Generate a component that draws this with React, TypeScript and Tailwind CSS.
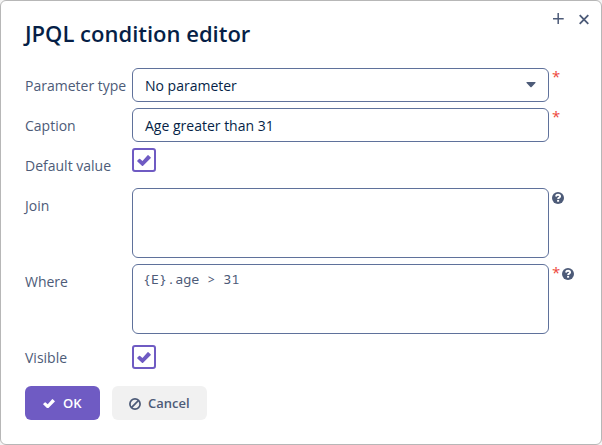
import type { ReactNode } from "react";

function CheckIcon({ className }: { className: string }) {
  return (
    <svg viewBox="0 0 14 11" className={className} fill="currentColor">
      <path d="M11.4 0.2L13.6 2.3Q14.1 2.8 13.6 3.3L6.1 10.7Q5.5 11.2 4.9 10.7L0.4 6.5Q-0.1 6 0.4 5.5L2 4Q2.6 3.6 3.1 4L5.5 6.1L10.6 0.3Q11 -0.1 11.4 0.2Z" />
    </svg>
  );
}

function HelpIcon({ className = "" }: { className?: string }) {
  return (
    <svg viewBox="0 0 12 12" className={`size-3 shrink-0 ${className}`}>
      <circle cx="6" cy="6" r="6" fill="#4d5b78" />
      <path d="M3.9 4.4C4.2 3.2 5 2.8 6 2.8C7.2 2.8 8.1 3.4 8.1 4.4C8.1 5.7 6.1 5.5 6.1 7" fill="none" stroke="#fff" strokeWidth="1.9" />
      <rect x="5.1" y="7.9" width="2" height="1.8" fill="#fff" />
    </svg>
  );
}

function Required() {
  return <span className="h-[18px] w-[7px] text-[15px] leading-[16px] text-[#ed473b]">*</span>;
}

function Row({ label, children }: { label: string; children: ReactNode }) {
  return (
    <div className="flex items-start">
      <label className="h-[34px] w-[107px] shrink-0 whitespace-nowrap text-[14px] leading-[35px] text-[#4d5b78]">{label}</label>
      {children}
    </div>
  );
}

function Checkbox({ className = "" }: { className?: string }) {
  return (
    <span className={`flex size-6 items-center justify-center rounded-[3px] border-2 border-[#6f5bc3] pt-px text-[#6f5bc3] ${className}`}>
      <CheckIcon className="h-[11px] w-3.5" />
    </span>
  );
}

const field = "w-[417px] shrink-0 rounded-[6px] border border-[#5f719b] bg-white";

export default function App() {
  return (
    <div className="h-[445px] w-[602px] bg-[#f4f4f4] font-['Open_Sans','Noto_Sans',sans-serif]">
      <div className="flex h-full w-full flex-col rounded-[6px] border border-[#b7b7b7] bg-white pl-6">
        <header className="flex h-[67px] shrink-0 items-start justify-between pr-[11px]">
          <h1 className="pt-4 text-[22px] leading-[32px] font-semibold text-[#061f47]">JPQL condition editor</h1>
          <div className="flex gap-[15px] pt-[12px]">
            <svg viewBox="0 0 11 11" className="size-[11px]" stroke="#4d5b78" strokeWidth="1.5" fill="none">
              <path d="M5.2 0V11M0 5.7H10.7" />
            </svg>
            <svg viewBox="0 0 11 11" className="mt-px size-[11px]" stroke="#4d5b78" strokeWidth="1.8" fill="none">
              <path d="M0.7 1.1L9.3 9.9M9.3 1.1L0.7 9.9" />
            </svg>
          </div>
        </header>
        <main className="flex flex-col gap-1.5">
          <Row label="Parameter type">
            <div className={`${field} flex h-[34px] items-center justify-between pr-3 pl-3 text-[14px] text-[#061f47]`}>
              No parameter
              <svg viewBox="0 0 10 6" className="mb-px h-1.5 w-2.5" fill="#4d5b78">
                <path d="M1 0H9Q10 0 9.4 1L5.6 5Q5 5.5 4.4 5L0.6 1Q0 0 1 0Z" />
              </svg>
            </div>
            <span className="flex pl-[3px]"><Required /></span>
          </Row>
          <Row label="Caption">
            <div className={`${field} h-[34px] pl-3 text-[14px] leading-[33px] text-[#061f47]`}>Age greater than 31</div>
            <span className="flex pl-[3px]"><Required /></span>
          </Row>
          <Row label="Default value"><Checkbox /></Row>
          <Row label="Join">
            <div className={`${field} h-[70px]`} />
            <HelpIcon className="mt-1 ml-[3px]" />
          </Row>
          <Row label="Where">
            <div className={`${field} h-[70px] pt-[4px] pl-[10px] font-['Noto_Sans_Mono','DejaVu_Sans_Mono',monospace] text-[13.4px] leading-5 whitespace-pre text-[#4d5b78]`}>{"{E}.age > 31"}</div>
            <span className="flex pl-[3px]"><Required /></span>
            <HelpIcon className="mt-1 ml-[3px]" />
          </Row>
          <Row label="Visible"><Checkbox className="mt-[5px]" /></Row>
        </main>
        <footer className="mt-3 flex gap-3 text-[13px] font-semibold">
          <button className="flex h-[34px] w-[75px] items-center rounded-[6px] bg-[#6f5bc3] pt-px pl-[18px] text-white">
            <CheckIcon className="mr-2 h-[9.5px] w-3" />OK
          </button>
          <button className="flex h-[34px] w-[95px] items-center rounded-[6px] bg-[#f1f1f1] pt-px pl-[17px] text-[#4d5b78]">
            <svg viewBox="0 0 12 12" className="mr-[7px] size-3" fill="none" stroke="currentColor" strokeWidth="1.7">
              <circle cx="6" cy="6" r="5.1" />
              <path d="M2.4 9.6L9.6 2.4" />
            </svg>Cancel
          </button>
        </footer>
      </div>
    </div>
  );
}
